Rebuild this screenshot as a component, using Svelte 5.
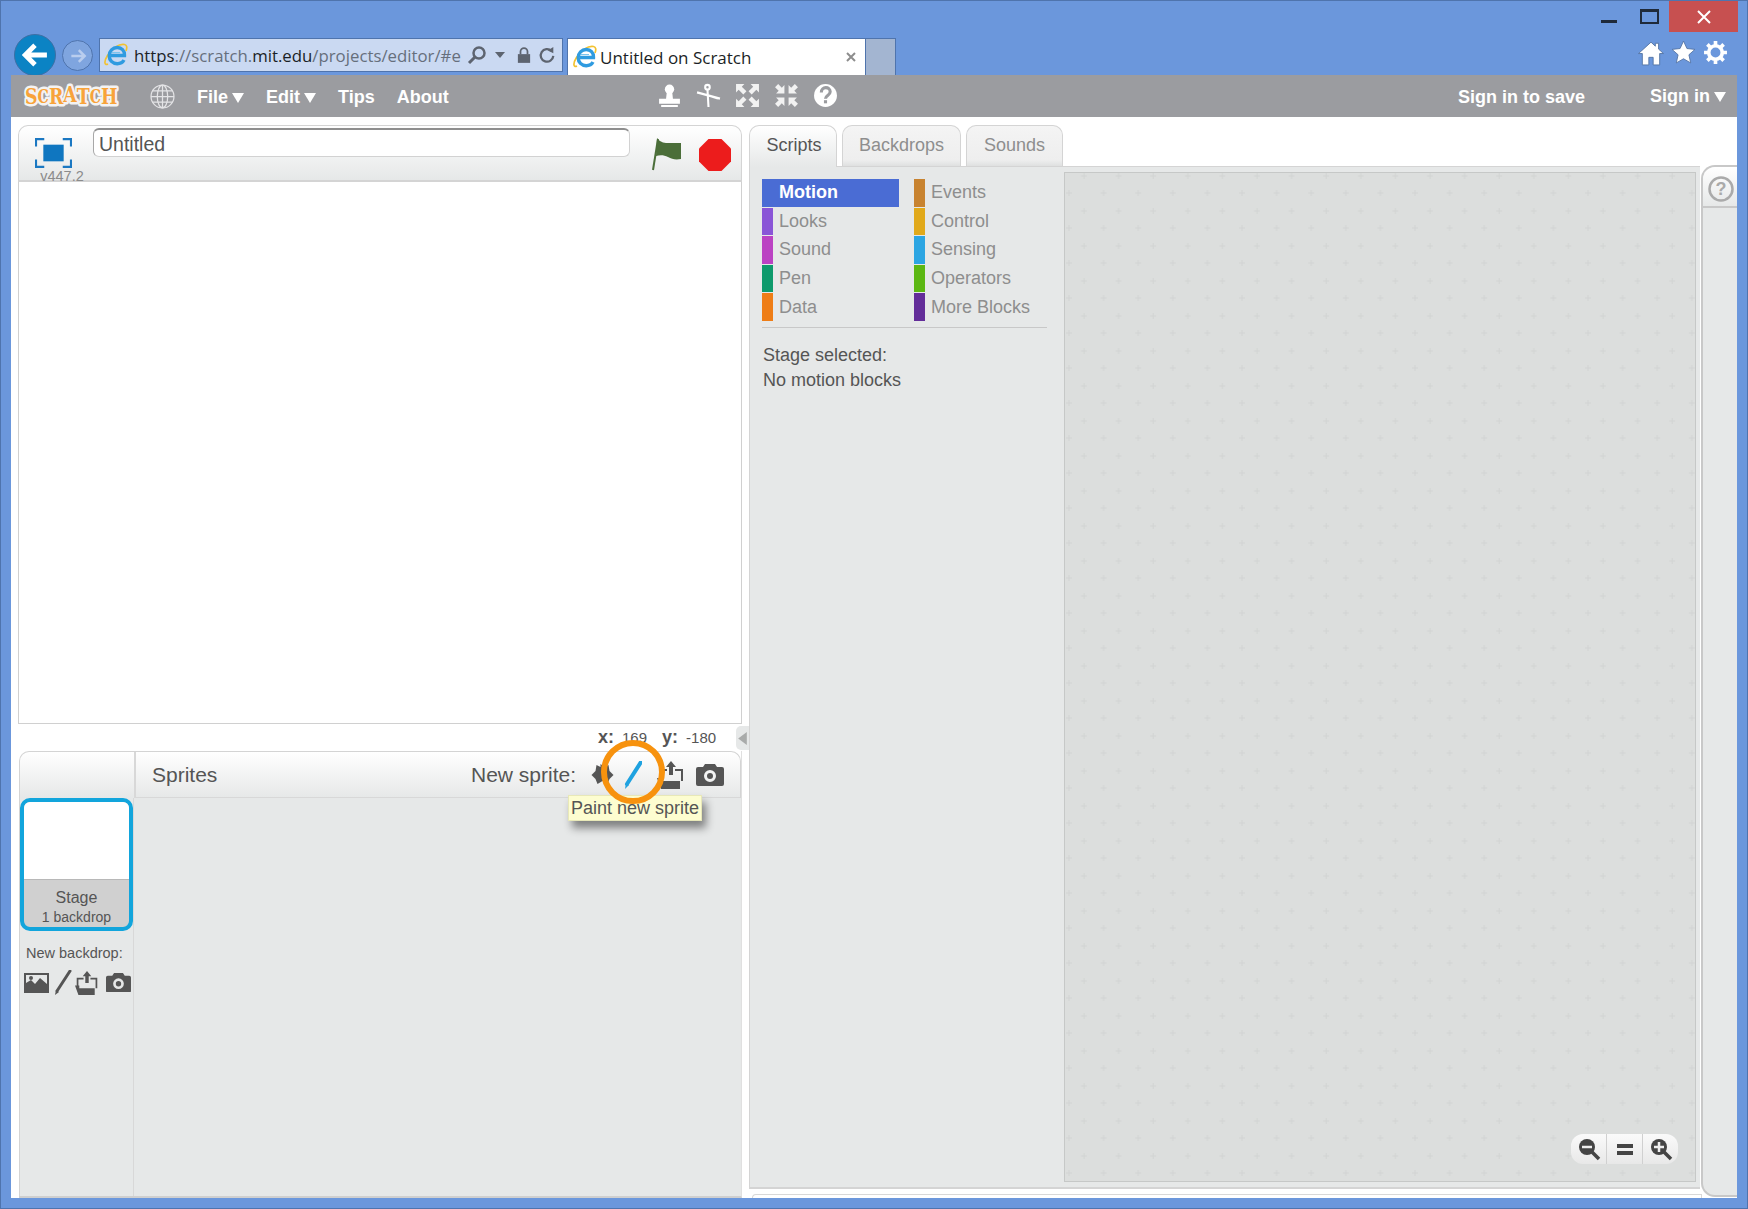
<script>
  const motionCol = [
    { name: 'Motion', color: '#4a6cd4', active: true },
    { name: 'Looks', color: '#8a55d7' },
    { name: 'Sound', color: '#bb42c3' },
    { name: 'Pen', color: '#0e9a6c' },
    { name: 'Data', color: '#ee7d16' }
  ];
  const eventCol = [
    { name: 'Events', color: '#c88330' },
    { name: 'Control', color: '#e1a91a' },
    { name: 'Sensing', color: '#2ca5e2' },
    { name: 'Operators', color: '#5cb712' },
    { name: 'More Blocks', color: '#632d99' }
  ];
  const categories = motionCol.flatMap((c, i) => [c, eventCol[i]]);
</script>

{#snippet ieLogo()}
  <svg class="ie" viewBox="0 0 24 24" fill="none">
    <path d="M4 21C0 23 0 18 3.500 12.500 8 5.500 15 .5 20.500 1.500c2.500.5 2.800 3 1.500 6.500" stroke="#f2c230" stroke-width="1.700"/>
    <path d="M7 12.500h13.500c.3-5-3-8-7.300-8-4.500 0-8 3.500-8 8.200 0 4.500 3.300 8 8 8 3 0 5.500-1.200 6.800-3.700" stroke="#2f9be0" stroke-width="3.400"/>
    <path d="M8 9.500h8" stroke="#7cc4ee" stroke-width="1"/>
  </svg>
{/snippet}

{#snippet uploadIcon()}
  <svg viewBox="0 0 28 28" fill="#555">
    <path d="M14 0l5 6h-3v8h-4V6H9z"/>
    <path d="M2 8h8v2H4v8H2zM18 8h8v12h-2V10h-6z"/>
    <path d="M0 17h5v3h18v8H4z"/>
  </svg>
{/snippet}

{#snippet cameraIcon()}
  <svg viewBox="0 0 28 22" fill="#555">
    <path fill-rule="evenodd" d="M9 0h10l2 3h5q2 0 2 2v15q0 2-2 2H2q-2 0-2-2V5q0-2 2-2h5zM14 6a6 6 0 100 12 6 6 0 000-12zM14 9a3 3 0 110 6 3 3 0 010-6z"/>
  </svg>
{/snippet}

<div class="window">
  <header class="chrome">
    <div class="caption">
      <span class="min"></span>
      <span class="max"></span>
      <span class="close">
        <svg viewBox="0 0 14 14" width="14" height="14"><path d="M1 1l12 12M13 1L1 13" stroke="#fff" stroke-width="2"/></svg>
      </span>
    </div>
    <div class="nav">
      <span class="back">
        <svg viewBox="0 0 24 24" width="26" height="26"><path d="M12 3L3 12l9 9M4 12h19" fill="none" stroke="#fff" stroke-width="4.500"/></svg>
      </span>
      <span class="forward">
        <svg viewBox="0 0 24 24" width="20" height="20"><path d="M13 5l7 7-7 7M20 12H4" fill="none" stroke="#b9cdee" stroke-width="3"/></svg>
      </span>
      <div class="address">
        {@render ieLogo()}
        <div class="url"><b>https</b>://scratch.<b>mit.edu</b>/projects/editor/#e</div>
        <svg class="addr-icon" viewBox="0 0 20 20" width="20" height="20"><circle cx="12" cy="8" r="5.500" fill="none" stroke="#5d6470" stroke-width="2.500"/><path d="M8 12l-6 6" stroke="#5d6470" stroke-width="3"/></svg>
        <svg class="addr-caret" viewBox="0 0 10 6" width="10" height="6"><path d="M0 0h10L5 6z" fill="#5d6470"/></svg>
        <svg class="addr-lock" viewBox="0 0 16 20" width="14" height="20"><path d="M1 9h14v10H1z" fill="#5d6470"/><path d="M4 9V6a4 4 0 018 0v3" fill="none" stroke="#5d6470" stroke-width="2"/></svg>
        <svg class="addr-icon" viewBox="0 0 20 20" width="18" height="20"><path d="M15 5.500A7 7 0 1017 11" fill="none" stroke="#5d6470" stroke-width="2.500"/><path d="M11 5l6-4v7z" fill="#5d6470"/></svg>
      </div>
      <div class="tab-ie">
        {@render ieLogo()}
        <span class="tab-title">Untitled on Scratch</span>
        <svg viewBox="0 0 10 10" width="10" height="10"><path d="M1 1l8 8M9 1L1 9" stroke="#8d8d8d" stroke-width="2"/></svg>
      </div>
      <div class="tab-new"></div>
      <div class="tools">
        <svg viewBox="0 0 24 24" width="26" height="26"><path d="M12 2L.5 12.500h3.500V23h6v-7h4v7h6V12.500h3.500L19 8.400V3h-3v2.700z" fill="#fff" stroke="#4f6f9f" stroke-width=".8"/></svg>
        <svg viewBox="0 0 24 24" width="25" height="25"><path d="M12 1l3.300 7.200 7.700.8-5.800 5.200 1.700 7.800L12 18l-6.900 4 1.700-7.800L1 9l7.700-.8z" fill="#fff" stroke="#4f6f9f" stroke-width=".8"/></svg>
        <svg viewBox="0 0 24 24" width="25" height="25"><circle cx="12" cy="12" r="6.500" fill="none" stroke="#fff" stroke-width="3.500"/><path d="M12 1v5M12 18v5M1 12h5M18 12h5M4.200 4.200l3.500 3.500M16.300 16.300l3.500 3.500M19.800 4.200l-3.500 3.500M7.700 16.300l-3.500 3.500" stroke="#fff" stroke-width="3.500"/></svg>
      </div>
    </div>
  </header>

  <div class="page">
    <nav class="menubar">
      <svg class="logo" viewBox="0 0 99 32" width="99" height="32">
        <g transform="translate(3 24) scale(.79 1)">
          <text class="logo-text logo-edge">S<tspan class="sm" dy="-1">C</tspan><tspan dy="1">R</tspan><tspan dy="-2">A</tspan><tspan dy="2">T</tspan><tspan class="sm" dy="-1">C</tspan><tspan dy="1">H</tspan></text>
          <text class="logo-text">S<tspan class="sm" dy="-1">C</tspan><tspan dy="1">R</tspan><tspan dy="-2">A</tspan><tspan dy="2">T</tspan><tspan class="sm" dy="-1">C</tspan><tspan dy="1">H</tspan></text>
        </g>
      </svg>
      <svg class="globe" viewBox="0 0 24 24" width="25" height="25" fill="none" stroke="#e4e4e6" stroke-width="1.200">
        <circle cx="12" cy="12" r="11"/>
        <ellipse cx="12" cy="12" rx="5" ry="11"/>
        <path d="M12 1v22M1 12h22M2.500 6.500h19M2.500 17.500h19"/>
      </svg>
      <span class="menu-item first">File<i class="caret"></i></span>
      <span class="menu-item">Edit<i class="caret"></i></span>
      <span class="menu-item">Tips</span>
      <span class="menu-item">About</span>
      <div class="menu-tools">
        <svg viewBox="0 0 24 24" width="25" height="25" fill="#fff"><circle cx="12" cy="6" r="4.500"/><path d="M9.500 8h5l.8 7H22v5H2v-5h6.700zM4 21h16v2H4z"/></svg>
        <svg viewBox="0 0 24 24" width="25" height="25" fill="none" stroke="#fff" stroke-width="2"><circle cx="11" cy="4" r="2.200"/><path d="M1 9l22 6M11 6l1 17M12 12l9 3"/></svg>
        <svg viewBox="0 0 24 24" width="25" height="25" fill="#f2f2f2"><path d="M1 1h8L6.500 3.500 11 8 8 11 3.500 6.500 1 9zM23 1v8l-2.500-2.500L16 11l-3-3 4.500-4.500L15 1zM1 23v-8l2.500 2.500L8 13l3 3-4.500 4.500L9 23zM23 23h-8l2.500-2.500L13 16l3-3 4.500 4.500L23 15z"/></svg>
        <svg viewBox="0 0 24 24" width="25" height="25" fill="#f2f2f2"><path d="M10 10H2l2.500-2.500L1 4l3-3 3.500 3.500L10 2zM14 10h8l-2.500-2.500L23 4l-3-3-3.500 3.500L14 2zM10 14H2l2.500 2.500L1 20l3 3 3.500-3.500L10 22zM14 14h8l-2.500 2.500L23 20l-3 3-3.500-3.500L14 22z"/></svg>
        <svg viewBox="0 0 24 24" width="25" height="25"><circle cx="12" cy="12" r="11" fill="#fff"/><path d="M8 9c0-6 8.500-6 8.500-.5 0 3.500-4.500 3.500-4.500 6.500" fill="none" stroke="#9b9ca0" stroke-width="3"/><rect x="10.500" y="16.500" width="3" height="3" fill="#9b9ca0"/></svg>
      </div>
      <span class="save">Sign in to save</span>
      <span class="menu-item signin">Sign in<i class="caret"></i></span>
    </nav>

    <main class="editor">
      <section class="left">
        <div class="stage-head">
          <div class="full-wrap">
            <svg viewBox="0 0 40 32" width="37" height="30">
              <path d="M1 9V1h9M30 1h9v8M1 23v8h9M30 31h9v-8" fill="none" stroke="#1b78c2" stroke-width="2.500"/>
              <rect x="9" y="7" width="22" height="18" fill="#0f76c0"/>
            </svg>
            <span class="version">v447.2</span>
          </div>
          <div class="title-input">Untitled</div>
          <svg class="flag" viewBox="0 0 32 36" width="32" height="36">
            <path d="M2 34L7 3" stroke="#4b6e39" stroke-width="2"/>
            <path d="M6 2c4 5 8 5 12 5 4 0 7 0 12 0v16c-6 1-9 0-13-2-4-2-8-2-12-1z" fill="#4b6e39"/>
          </svg>
          <svg class="stop" viewBox="0 0 32 32" width="32" height="32">
            <path d="M9.500 0h13L32 9.500v13L22.500 32h-13L0 22.500v-13z" fill="#ec1c1c"/>
          </svg>
        </div>
        <div class="stage"></div>
        <div class="coords">
          <b>x:</b><span class="cv">169</span><b class="yl">y:</b><span class="cv">-180</span>
          <span class="collapse"><svg viewBox="0 0 8 12" width="9" height="13"><path d="M8 0v12L0 6z" fill="#a9abaa"/></svg></span>
        </div>
        <div class="sprites">
          <div class="sprites-head">
            <div class="head-side"></div>
            <div class="head-main">
              <span class="sprites-label">Sprites</span>
              <span class="new-sprite">New sprite:</span>
              <svg class="i-lib" viewBox="0 0 26 22"><path fill="#555" d="M13 0l4 3 4-2 1 6 4 4-4 4-2 5-5-3-5 3-2-5-4-4 4-4 1-6 4 2z"/></svg>
              <svg class="i-pen" viewBox="0 0 18 28"><path d="M17 1L3 23" stroke="#1fa2e0" stroke-width="4" stroke-linecap="round"/><path d="M2 22l3 2-4 4z" fill="#1fa2e0"/></svg>
              <span class="i-up">{@render uploadIcon()}</span>
              <span class="i-cam">{@render cameraIcon()}</span>
            </div>
          </div>
          <div class="sprites-body">
            <aside class="stage-side">
              <div class="thumb">
                <div class="thumb-img"></div>
                <div class="thumb-label">
                  <span class="thumb-name">Stage</span>
                  <span class="thumb-sub">1 backdrop</span>
                </div>
              </div>
              <div class="new-backdrop">New backdrop:</div>
              <div class="backdrop-icons">
                <svg class="bd-img" viewBox="0 0 25 20"><path fill="#555" fill-rule="evenodd" d="M0 0h25v20H0zM2 2v8l5-3 4 4 5-6 7 6V2zM7 3a2 2 0 110 4 2 2 0 010-4z"/></svg>
                <svg class="bd-pen" viewBox="0 0 18 25"><path d="M16 1L3 21" stroke="#555" stroke-width="3" stroke-linecap="round"/><path d="M2 20l3 2-4 3z" fill="#555"/></svg>
                <span class="bd-up">{@render uploadIcon()}</span>
                <span class="bd-cam">{@render cameraIcon()}</span>
              </div>
            </aside>
            <div class="sprite-list"></div>
          </div>
          <div class="tooltip">Paint new sprite</div>
          <div class="ring"></div>
        </div>
      </section>

      <section class="right">
        <div class="tabs">
          <span class="tab active">Scripts</span>
          <span class="tab backdrops">Backdrops</span>
          <span class="tab sounds">Sounds</span>
        </div>
        <div class="workspace">
          <div class="panel">
            <div class="palette">
              <div class="cats">
                {#each categories as cat}
                  <div class="cat" class:active={cat.active} style="--cat: {cat.color}">
                    <span class="swatch"></span>
                    <span class="cat-name">{cat.name}</span>
                  </div>
                {/each}
              </div>
              <div class="palette-note">Stage selected:<br />No motion blocks</div>
            </div>
            <div class="scripts">
              <svg class="dots" width="100%" height="100%">
                <defs>
                  <pattern id="dots" width="34.600" height="35" patternUnits="userSpaceOnUse" x="4" y="-3">
                    <path d="M15 3v6M12 6h6M0 20v6M-3 23h6M34.600 20v6M31.600 23h6" stroke="#d2d4d3" stroke-width="1"/>
                  </pattern>
                </defs>
                <rect width="100%" height="100%" fill="url(#dots)"/>
              </svg>
              <div class="zoom">
                <span class="zoom-btn"><svg viewBox="0 0 24 24" width="24" height="24"><circle cx="10" cy="10" r="8" fill="#444"/><path d="M5 10h10" stroke="#eee" stroke-width="2.500"/><path d="M15 15l7 7" stroke="#444" stroke-width="3.500"/></svg></span>
                <span class="zoom-btn"><svg viewBox="0 0 24 24" width="24" height="24"><path d="M4 7h16v4H4zM4 14h16v4H4z" fill="#444"/></svg></span>
                <span class="zoom-btn"><svg viewBox="0 0 24 24" width="24" height="24"><circle cx="10" cy="10" r="8" fill="#444"/><path d="M5 10h10M10 5v10" stroke="#eee" stroke-width="2.500"/><path d="M15 15l7 7" stroke="#444" stroke-width="3.500"/></svg></span>
              </div>
            </div>
          </div>
          <div class="bottom-strip"></div>
        </div>
        <aside class="help-col">
          <div class="help-btn">
            <svg viewBox="0 0 26 26" width="26" height="26"><circle cx="13" cy="13" r="11.500" fill="none" stroke="#aaa" stroke-width="2.500"/><text x="13" y="19" text-anchor="middle" class="help-q">?</text></svg>
          </div>
        </aside>
      </section>
    </main>
  </div>
</div>

<style>
  :global(body) {
    margin: 0;
    background: #6b97dc;
  }

  .window {
    width: 1748px;
    height: 1209px;
    box-sizing: border-box;
    background: #6b97dc;
    border: 1px solid #4f74ad;
    display: flex;
    flex-direction: column;
    font-family: 'Liberation Sans', Arial, sans-serif;
    color: #555;
    overflow: hidden;
  }

  /* browser chrome */
  .chrome {
    height: 74px;
    flex-shrink: 0;
    display: flex;
    flex-direction: column;
  }

  .caption {
    height: 31px;
    display: flex;
    justify-content: flex-end;
    align-items: flex-start;
    padding-right: 9px;
  }

  .min {
    width: 16px;
    height: 3px;
    background: #1f2a3a;
    margin: 19px 23px 0 0;
  }

  .max {
    width: 15px;
    height: 10px;
    border: 2px solid #1f2a3a;
    border-top-width: 3px;
    margin: 8px 10px 0 0;
  }

  .close {
    width: 69px;
    height: 31px;
    background: #c75050;
    display: flex;
    align-items: center;
    justify-content: center;
  }

  .nav {
    position: relative;
    display: flex;
    align-items: flex-start;
    padding: 6px 0 0 13px;
  }

  .back {
    width: 42px;
    height: 42px;
    margin-top: -4px;
    border-radius: 50%;
    background: #0b83c4;
    border: 1px solid #3d6fa5;
    box-sizing: border-box;
    display: flex;
    align-items: center;
    justify-content: center;
  }

  .forward {
    width: 31px;
    height: 31px;
    margin: 2px 0 0 6px;
    border-radius: 50%;
    background: #7fa5df;
    border: 1px solid #4f74ad;
    box-sizing: border-box;
    display: flex;
    align-items: center;
    justify-content: center;
  }

  .address {
    width: 464px;
    height: 34px;
    margin-left: 6px;
    box-sizing: border-box;
    background: #cad9f2;
    border: 1px solid #4f74ad;
    display: flex;
    align-items: center;
    padding-left: 4px;
  }

  .ie {
    width: 24px;
    height: 24px;
    flex-shrink: 0;
  }

  .url {
    width: 326px;
    margin-left: 6px;
    white-space: nowrap;
    font-family: 'Open Sans', sans-serif;
    font-size: 16.800px;
    color: #666f7c;
  }

  .url b {
    font-weight: 400;
    color: #1b1f26;
  }

  .addr-icon {
    margin-left: 7px;
    flex-shrink: 0;
  }

  .addr-lock {
    margin-left: 12px;
    flex-shrink: 0;
  }

  .addr-caret {
    margin-left: 8px;
    flex-shrink: 0;
  }

  .tab-ie {
    width: 299px;
    height: 37px;
    margin-left: 4px;
    box-sizing: border-box;
    background: #fff;
    border: 1px solid #4f74ad;
    border-bottom: 0;
    display: flex;
    align-items: center;
    padding: 0 9px 0 5px;
  }

  .tab-title {
    flex: 1;
    margin-left: 3px;
    font-family: 'Open Sans', sans-serif;
    font-size: 17px;
    color: #1b1f26;
  }

  .tab-new {
    width: 30px;
    height: 37px;
    box-sizing: border-box;
    background: #a3b5d1;
    border: 1px solid #4f74ad;
    border-left: 0;
    border-bottom: 0;
  }

  .tools {
    margin: 2px 0 0 auto;
    padding-right: 19px;
    display: flex;
    gap: 7px;
  }

  /* scratch page */
  .page {
    flex: 1;
    min-height: 0;
    margin: 0 10px 10px 10px;
    background: #fff;
    display: flex;
    flex-direction: column;
    position: relative;
  }

  .menubar {
    height: 42px;
    flex-shrink: 0;
    box-sizing: border-box;
    padding: 3px 0 0 11px;
    background: #9b9ca0;
    display: flex;
    align-items: center;
    color: #fff;
  }

  .logo {
    flex-shrink: 0;
    overflow: visible;
    margin-top: -3px;
  }

  .logo-text {
    font-family: 'DejaVu Serif', serif;
    font-weight: 700;
    font-size: 22px;
    fill: #f8a33a;
  }

  .logo-text .sm {
    font-size: 18px;
  }

  .logo-edge {
    fill: #fff;
    stroke: #f3f3f3;
    stroke-width: 5px;
    stroke-linejoin: round;
  }

  .globe {
    margin-left: 29px;
    margin-top: -3px;
    flex-shrink: 0;
  }

  .menu-item {
    font-size: 18px;
    font-weight: 700;
    margin-left: 22px;
    display: inline-flex;
    align-items: center;
  }

  .caret {
    width: 0;
    height: 0;
    margin-left: 4px;
    border-left: 6px solid transparent;
    border-right: 6px solid transparent;
    border-top: 10px solid #fff;
  }

  .menu-tools {
    display: flex;
    gap: 14px;
    margin: -4px 0 0 208px;
  }

  .save {
    margin-left: auto;
    font-size: 18px;
    font-weight: 700;
  }

  .signin {
    margin: -2px 11px 0 65px;
  }

  .editor {
    flex: 1;
    min-height: 0;
    display: flex;
    padding-top: 8px;
  }

  .left {
    width: 724px;
    margin-left: 7px;
    flex-shrink: 0;
    display: flex;
    flex-direction: column;
  }

  .stage-head {
    height: 57px;
    flex-shrink: 0;
    box-sizing: border-box;
    position: relative;
    display: flex;
    align-items: flex-start;
    border: 1px solid #d4d4d4;
    border-bottom: 2px solid #d4d4d4;
    border-radius: 10px 10px 0 0;
    background: linear-gradient(#fff, #e6e8e8);
  }

  .full-wrap {
    width: 74px;
    display: flex;
    flex-direction: column;
    align-items: center;
    padding: 12px 6px 0 0;
    box-sizing: border-box;
    flex-shrink: 0;
  }

  .version {
    font-size: 14.500px;
    line-height: 14px;
    color: #8b8b8b;
    margin: 1px 0 0 18px;
  }

  .title-input {
    width: 537px;
    height: 29px;
    margin-top: 2px;
    box-sizing: border-box;
    background: #fff;
    border: 1px solid #d2d2d2;
    border-top: 2px solid #8e8e8e;
    border-left-color: #a8a8a8;
    border-radius: 6px;
    font-size: 19.500px;
    line-height: 29px;
    padding-left: 5px;
  }

  .flag {
    margin: 10px 0 0 21px;
    flex-shrink: 0;
  }

  .stop {
    margin: 13px 0 0 16px;
    flex-shrink: 0;
  }

  .stage {
    height: 542px;
    flex-shrink: 0;
    box-sizing: border-box;
    border: 1px solid #d0d0d0;
    border-top: 0;
    background: #fff;
  }

  .coords {
    height: 27px;
    flex-shrink: 0;
    display: flex;
    align-items: center;
    position: relative;
    padding-left: 580px;
    font-size: 15px;
  }

  .coords b {
    font-size: 18px;
  }

  .cv {
    margin-left: 8px;
  }

  .coords .yl {
    margin-left: 15px;
  }

  .collapse {
    position: absolute;
    left: 718px;
    top: 2px;
    width: 13px;
    height: 24px;
    background: #e6e8e8;
    border-radius: 5px 0 0 5px;
    display: flex;
    align-items: center;
    justify-content: center;
  }

  .sprites {
    flex: 1;
    min-height: 0;
    position: relative;
    margin-left: 1px;
    display: flex;
    flex-direction: column;
    border-right: 1px solid #e0e0e0;
    border-bottom: 2px solid #cfcfcf;
  }

  .sprites-head {
    height: 47px;
    flex-shrink: 0;
    display: flex;
    box-sizing: border-box;
    border: 1px solid #d4d4d4;
    border-bottom: 0;
    border-radius: 10px 10px 0 0;
    background: linear-gradient(#fff, #e6e8e8);
  }

  .head-side {
    width: 114px;
    flex-shrink: 0;
    border-right: 2px solid #d8d8d8;
  }

  .head-main {
    flex: 1;
    display: flex;
    align-items: center;
    padding-left: 16px;
    border-bottom: 1px solid #d8d8d8;
  }

  .sprites-label,
  .new-sprite {
    font-size: 21px;
    color: #555;
  }

  .new-sprite {
    margin-left: auto;
  }

  .i-lib {
    width: 27px;
    height: 22px;
    margin-left: 11px;
    flex-shrink: 0;
  }

  .i-pen {
    width: 18px;
    height: 28px;
    margin-left: 10px;
    flex-shrink: 0;
  }

  .i-up {
    width: 28px;
    height: 28px;
    margin-left: 15px;
    flex-shrink: 0;
  }

  .i-cam {
    width: 28px;
    height: 22px;
    margin: 0 16px 0 11px;
    flex-shrink: 0;
  }

  .sprites-body {
    flex: 1;
    min-height: 0;
    display: flex;
  }

  .stage-side {
    width: 115px;
    flex-shrink: 0;
    box-sizing: border-box;
    background: #e6e8e8;
    border-left: 1px solid #d4d4d4;
    border-right: 1px solid #d8d8d8;
  }

  .thumb {
    width: 113px;
    height: 133px;
    box-sizing: border-box;
    border: 4px solid #12a5dc;
    border-radius: 10px;
    background: #d0d0d0;
    overflow: hidden;
    display: flex;
    flex-direction: column;
  }

  .thumb-img {
    height: 77px;
    flex-shrink: 0;
    background: #fff;
    border-bottom: 1px solid #b8b8b8;
  }

  .thumb-label {
    display: flex;
    flex-direction: column;
    align-items: center;
    padding-top: 9px;
    color: #555;
  }

  .thumb-name {
    font-size: 16px;
    line-height: 18px;
  }

  .thumb-sub {
    font-size: 14px;
    line-height: 18px;
    margin-top: 1px;
  }

  .new-backdrop {
    font-size: 14.500px;
    margin: 14px 0 0 6px;
    line-height: 17px;
  }

  .backdrop-icons {
    display: flex;
    align-items: center;
    margin: 8px 0 0 4px;
  }

  .bd-img {
    width: 25px;
    height: 20px;
    flex-shrink: 0;
  }

  .bd-pen {
    width: 18px;
    height: 25px;
    margin-left: 5px;
    flex-shrink: 0;
  }

  .bd-up {
    width: 24px;
    height: 24px;
    margin-left: 3px;
    flex-shrink: 0;
  }

  .bd-cam {
    width: 25px;
    height: 20px;
    margin-left: 7px;
    flex-shrink: 0;
  }

  .sprite-list {
    flex: 1;
    background: #e6e8e8;
  }

  .tooltip {
    position: absolute;
    left: 549px;
    top: 44px;
    height: 24px;
    padding: 0 2px;
    line-height: 24px;
    font-size: 18px;
    white-space: nowrap;
    background: #fdfdd0;
    border: 1px solid #e8e8b8;
    box-shadow: 4px 7px 9px rgba(0, 0, 0, 0.45);
  }

  .ring {
    position: absolute;
    left: 582px;
    top: -11px;
    width: 64px;
    height: 64px;
    box-sizing: border-box;
    border: 6px solid #f7920e;
    border-radius: 50%;
  }

  .right {
    flex: 1;
    min-width: 0;
    margin-left: 7px;
    display: flex;
    flex-direction: column;
    position: relative;
  }

  .tabs {
    height: 41px;
    flex-shrink: 0;
    display: flex;
    gap: 5px;
  }

  .tab {
    height: 41px;
    box-sizing: border-box;
    padding-top: 9px;
    text-align: center;
    font-size: 18px;
    color: #8e8e8e;
    background: linear-gradient(#f4f4f4, #eee 85%, #dfe0e0);
    border: 1px solid #d4d4d4;
    border-bottom: 0;
    border-radius: 10px 10px 0 0;
  }

  .tab.active {
    width: 88px;
    height: 42px;
    padding-left: 2px;
    position: relative;
    z-index: 1;
    color: #555;
    background: linear-gradient(#fff, #e6e8e8);
  }

  .tab.backdrops {
    width: 119px;
  }

  .tab.sounds {
    width: 97px;
  }

  .workspace {
    flex: 1;
    min-height: 0;
    display: flex;
    flex-direction: column;
    width: 951px;
  }

  .panel {
    height: 1023px;
    flex-shrink: 0;
    box-sizing: border-box;
    display: flex;
    background: #e6e8e8;
    border: 1px solid #d4d4d4;
    border-bottom-width: 2px;
    border-right: 0;
  }

  .palette {
    width: 314px;
    flex-shrink: 0;
    box-sizing: border-box;
    padding: 12px 0 0 12px;
  }

  .cats {
    display: grid;
    width: 285px;
    grid-template-columns: 152px 133px;
    grid-auto-rows: 27.600px;
    row-gap: 1px;
    padding-bottom: 6px;
    border-bottom: 1px solid #c8c8c8;
  }

  .cat {
    display: flex;
    align-items: center;
    font-size: 18px;
    color: #8e8e8e;
  }

  .swatch {
    width: 11px;
    height: 100%;
    background: var(--cat);
    flex-shrink: 0;
  }

  .cat-name {
    margin-left: 6px;
  }

  .cat.active {
    width: 137px;
    background: var(--cat);
    color: #fff;
    font-weight: 700;
  }

  .palette-note {
    margin: 15px 0 0 1px;
    font-size: 18px;
    line-height: 25px;
    color: #555;
  }

  .scripts {
    width: 632px;
    margin: 5px 0 5px 0;
    box-sizing: border-box;
    position: relative;
    background: #dcdedd;
    border: 1px solid #c6c8c7;
  }

  .dots {
    display: block;
  }

  .zoom {
    position: absolute;
    right: 17px;
    bottom: 17px;
    width: 107px;
    height: 30px;
    display: flex;
    background: linear-gradient(#fafafa, #e8e8e8);
    border-radius: 12px;
  }

  .zoom-btn {
    flex: 1;
    display: flex;
    align-items: center;
    justify-content: center;
    border-left: 1px solid #d0d0d0;
  }

  .zoom-btn:first-child {
    border-left: 0;
  }

  .bottom-strip {
    height: 3px;
    margin: 5px 0 0 3px;
    width: 948px;
    border: 1px solid #d8d8d8;
    border-bottom: 0;
    border-radius: 6px 0 0 0;
  }

  .help-col {
    position: absolute;
    right: 0;
    top: 40px;
    bottom: 1px;
    width: 36px;
    box-sizing: border-box;
    background: #e6e8e8;
    border: 2px solid #c8c8c8;
    border-right: 0;
    border-radius: 14px 0 0 14px;
  }

  .help-btn {
    height: 41px;
    box-sizing: border-box;
    padding: 9px 0 0 5px;
    background: linear-gradient(#fff, #e6e8e8);
    border-radius: 12px 0 0 0;
    border-bottom: 2px solid #c8c8c8;
  }

  .help-q {
    font-family: 'Liberation Sans', sans-serif;
    font-size: 18px;
    font-weight: 700;
    fill: #aaa;
  }
</style>
